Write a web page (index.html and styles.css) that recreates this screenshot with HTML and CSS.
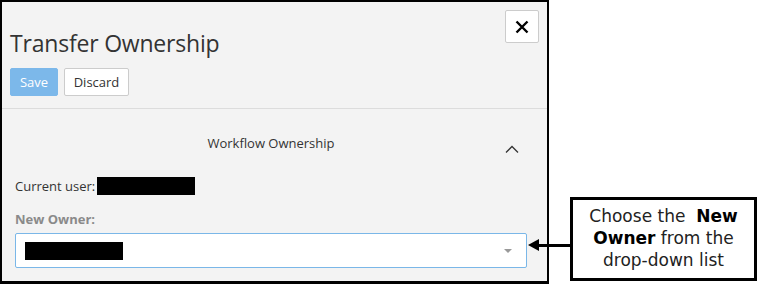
FILE: index.html
```html
<!DOCTYPE html>
<html>
<head>
<meta charset="utf-8">
<link rel="stylesheet" href="styles.css">
</head>
<body>
<div class="page">
  <div class="dialog">
    <div class="header">
      <div class="head-left">
        <h1 class="title">Transfer Ownership</h1>
        <div class="actions">
          <button class="btn btn-save">Save</button>
          <button class="btn btn-discard">Discard</button>
        </div>
      </div>
      <button class="close" aria-label="Close">
        <svg width="14" height="14" viewBox="0 0 14 14"><path d="M1.5 1.5 L12.5 12.5 M12.5 1.5 L1.5 12.5" stroke="#000" stroke-width="2.4" fill="none"/></svg>
      </button>
    </div>
    <div class="section">
      <div class="section-head">
        <span class="section-title">Workflow Ownership</span>
        <svg class="chevron" width="14" height="8" viewBox="0 0 14 8"><path d="M1 7.5 L7 1.5 L13 7.5" stroke="#333" stroke-width="1.3" fill="none"/></svg>
      </div>
      <div class="current">Current user: <span class="redact redact-user"></span></div>
      <div class="label">New Owner:</div>
      <div class="select">
        <span class="redact redact-owner"></span>
        <span class="caret"></span>
      </div>
    </div>
  </div>
  <div class="arrow">
    <span class="arrow-head"></span>
    <span class="arrow-line"></span>
  </div>
  <div class="callout">
    <div class="callout-line">Choose the&nbsp; <b>New</b></div>
    <div class="callout-line"><b>Owner</b> from the</div>
    <div class="callout-line">drop-down list</div>
  </div>
</div>
</body>
</html>
```
FILE: styles.css
```css
* { box-sizing: border-box; }
html, body { margin: 0; padding: 0; background: #fff; }
.page {
  position: relative;
  width: 759px;
  height: 284px;
  display: flex;
  align-items: flex-start;
}
.dialog {
  width: 549px;
  height: 284px;
  border: 2px solid #000;
  border-bottom-width: 3px;
  background: #f3f3f3;
  font-family: "Open Sans", sans-serif;
  color: #333;
}
.header {
  display: flex;
  justify-content: space-between;
  padding: 8px 8px 0 8px;
  height: 107px;
  border-bottom: 1px solid #dcdcdc;
}
.title {
  margin: 17px 0 0 0;
  font-size: 23px;
  font-weight: 400;
  line-height: 32px;
  color: #333;
  letter-spacing: -0.2px;
}
.actions {
  display: flex;
  gap: 6px;
  margin-top: 9px;
}
.btn {
  height: 28px;
  border-radius: 2px;
  font-family: "Open Sans", sans-serif;
  font-size: 13px;
  padding: 0;
}
.btn-save {
  width: 48px;
  background: #7cb8ea;
  border: 1px solid #7cb8ea;
  color: #fff;
}
.btn-discard {
  width: 65px;
  background: #fff;
  border: 1px solid #ccc;
  color: #333;
}
.close {
  width: 34px;
  height: 33px;
  background: #fff;
  border: 1px solid #ccc;
  border-radius: 2px;
  display: flex;
  align-items: center;
  justify-content: center;
  padding: 0;
}
.section {
  padding: 0 20px 0 13px;
}
.section-head {
  position: relative;
  height: 67px;
  display: flex;
  justify-content: center;
  padding-top: 25px;
}
.section-title {
  font-size: 13px;
  line-height: 18px;
  color: #333;
}
.chevron {
  position: absolute;
  right: 8px;
  top: 36px;
}
.current {
  display: flex;
  align-items: center;
  font-size: 13px;
  line-height: 18px;
  gap: 2px;
  height: 20px;
}
.redact { display: inline-block; background: #000; }
.redact-user { width: 98px; height: 18px; }
.label {
  margin-top: 14px;
  font-size: 13px;
  font-weight: 700;
  color: #8a8a8a;
  line-height: 18px;
}
.select {
  margin-top: 5px;
  height: 35px;
  width: 512px;
  background: #fff;
  border: 1px solid #7ab7e8;
  border-radius: 2px;
  display: flex;
  align-items: center;
  justify-content: space-between;
  padding: 0 14px 0 9px;
}
.redact-owner { width: 98px; height: 18px; }
.caret {
  width: 0; height: 0;
  border-left: 4px solid transparent;
  border-right: 4px solid transparent;
  border-top: 4px solid #999;
}
.arrow {
  position: absolute;
  left: 528px;
  top: 239px;
  width: 44px;
  height: 12px;
  display: flex;
  align-items: center;
}
.arrow-head {
  width: 0; height: 0;
  border-top: 6px solid transparent;
  border-bottom: 6px solid transparent;
  border-right: 11px solid #000;
}
.arrow-line {
  flex: 1;
  height: 3px;
  background: #000;
}
.callout {
  margin: 197px 0 0 21px;
  width: 187px;
  height: 84px;
  border: 3px solid #000;
  background: #fff;
  font-family: "DejaVu Sans", sans-serif;
  font-size: 17px;
  line-height: 22px;
  color: #222;
  text-align: center;
  padding: 5px 4px 0;
}
.callout-line { white-space: nowrap; }
.callout b { color: #000; }
```
